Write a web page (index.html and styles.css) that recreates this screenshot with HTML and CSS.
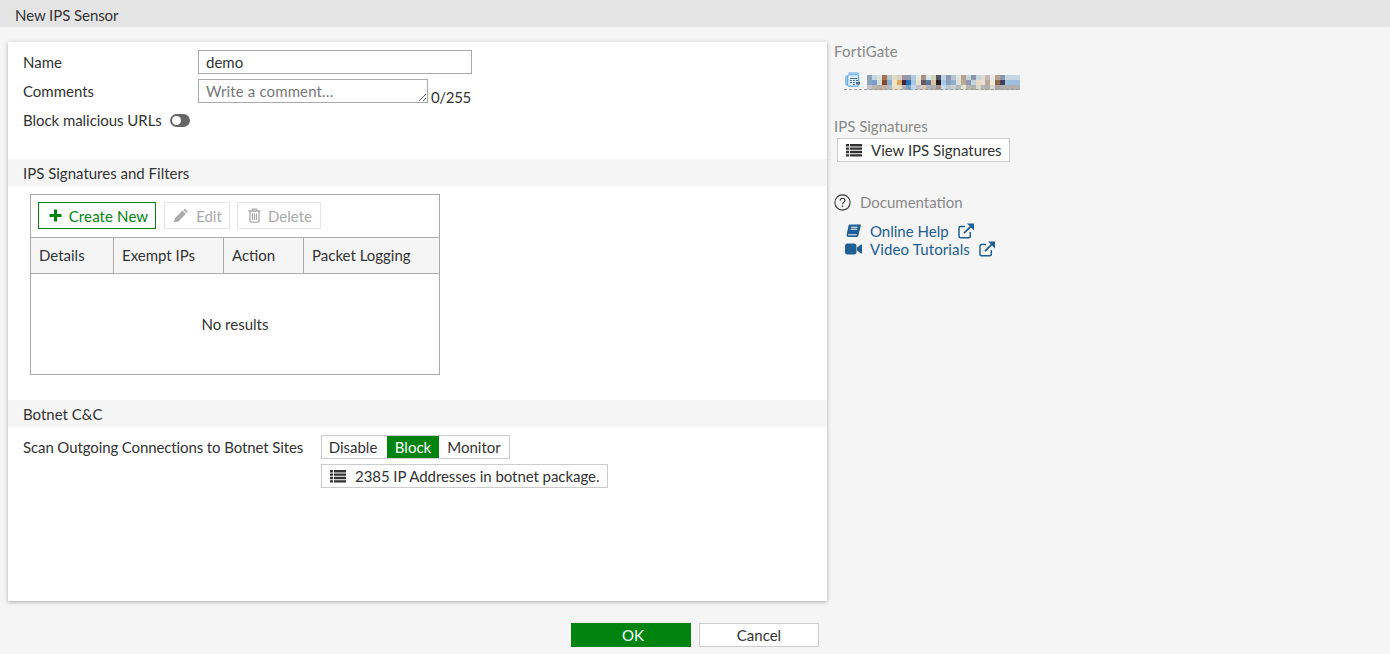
FILE: index.html
```html
<!DOCTYPE html>
<html lang="en">
<head>
<meta charset="utf-8">
<title>New IPS Sensor</title>
<link rel="stylesheet" href="styles.css">
</head>
<body>
<svg class="defs" width="0" height="0" aria-hidden="true">
  <symbol id="i-list" viewBox="0 0 16 14">
    <path d="M0 1h3v2.4H0zM4 1h12v2.4H4zM0 4.4h3v2.4H0zM4 4.4h12v2.4H4zM0 7.8h3v2.4H0zM4 7.8h12v2.4H4zM0 11.2h3v2.4H0zM4 11.2h12v2.4H4z"/>
  </symbol>
  <symbol id="i-ext" viewBox="0 0 16 16">
    <path d="M12.300 9v4.200c0 .9-.7 1.500-1.500 1.500H2.500c-.9 0-1.500-.6-1.500-1.500V5c0-.9.6-1.500 1.500-1.500H7" fill="none" stroke="currentColor" stroke-width="1.500"/>
    <path d="M6 10.200 13.500 2.700" fill="none" stroke="currentColor" stroke-width="1.800"/>
    <path d="M9 .4H16V7.400z" fill="currentColor"/>
  </symbol>
</svg>

<header class="title-bar">New IPS Sensor</header>

<div class="workspace">
  <main class="card">
    <div class="form-block">
      <div class="field field-name">
        <label class="field-label">Name</label>
        <input class="text-input" type="text" value="demo">
      </div>
      <div class="field field-comments">
        <label class="field-label">Comments</label>
        <textarea class="comment-input" placeholder="Write a comment…"></textarea>
        <span class="counter">0/255</span>
      </div>
      <div class="field field-toggle">
        <label class="toggle-label">Block malicious URLs</label>
        <span class="toggle"><span class="toggle-knob"></span></span>
      </div>
    </div>

    <h2 class="section-head">IPS Signatures and Filters</h2>
    <div class="table-wrap">
      <div class="table-box">
        <div class="toolbar">
          <button class="tool tool-create" type="button">
            <svg class="tool-icon" width="13" height="13" viewBox="0 0 13 13"><path d="M5 0.500h3V5h4.500v3H8v4.500H5V8H0.500V5H5z" fill="#00830f"/></svg>
            Create New
          </button>
          <button class="tool tool-edit" type="button">
            <svg class="tool-icon" width="15" height="14" viewBox="0 0 15 14"><path d="M0.800 13.300 1.700 9.400 9.500 1.600 12.800 4.900 5 12.700zM10.300 0.900 11 0.300C11.500-.1 12-.1 12.400.2L14.300 2.100C14.700 2.500 14.700 3 14.300 3.400L13.600 4.100z" fill="#aaa"/></svg>
            Edit
          </button>
          <button class="tool tool-delete" type="button">
            <svg class="tool-icon" width="13" height="15" viewBox="0 0 13 15"><path d="M0.500 3h12M4.500 3V1.200h4V3M2 3v10.200c0 .6.400 1 1 1h7c.6 0 1-.4 1-1V3" fill="none" stroke="#aaa" stroke-width="1.300"/><path d="M4.500 5.500v6.500M6.500 5.500v6.500M8.500 5.500v6.500" stroke="#aaa" stroke-width="1.200"/></svg>
            Delete
          </button>
        </div>
        <div class="thead">
          <div class="th th-details">Details</div>
          <div class="th th-exempt">Exempt IPs</div>
          <div class="th th-action">Action</div>
          <div class="th th-log">Packet Logging</div>
        </div>
        <div class="tbody">No results</div>
      </div>
    </div>

    <h2 class="section-head section-botnet">Botnet C&amp;C</h2>
    <div class="botnet">
      <span class="botnet-label">Scan Outgoing Connections to Botnet Sites</span>
      <div class="botnet-controls">
        <div class="segmented">
          <span class="seg seg-disable">Disable</span>
          <span class="seg seg-block">Block</span>
          <span class="seg seg-monitor">Monitor</span>
        </div>
        <button class="plain-btn botnet-btn" type="button">
          <svg class="list-icon" width="16" height="14"><use href="#i-list"/></svg>
          2385 IP Addresses in botnet package.
        </button>
      </div>
    </div>
  </main>

  <aside class="side">
    <div class="side-title side-forti">FortiGate</div>
    <div class="device">
      <svg class="device-icon" width="16" height="17" viewBox="0 0 16 17">
        <path d="M3.500 1h9c.8 0 1.300.5 1.300 1.300M1 3.500V12c0 .6.300 1 .8 1.200" fill="none" stroke="#5aa3e6" stroke-width="1.200"/>
        <rect x="2.700" y="2.800" width="11" height="11.500" rx="1.500" fill="#dcecfa" stroke="#5aa3e6" stroke-width="1.100"/>
        <path d="M5 6h7.500v1H5zM5 8h2v1H5zM8 8h2v1H8zM11 8h2v1h-2zM5 10h2v1H5zM8 10h2v1H8zM11 10h4v2.500h-4zM8 12h2v1H8z" fill="#4c6f92"/>
      </svg>
      <svg class="device-name" width="153" height="15" viewBox="0 0 31 3" preserveAspectRatio="none" shape-rendering="crispEdges" role="img" aria-label="Blurred device name">
        <g>
          <rect x="0" y="0" width="1" height="1" fill="#8fa3b5"/><rect x="1" y="0" width="1" height="1" fill="#c6d8e4"/><rect x="2" y="0" width="1" height="1" fill="#dbe3dc"/><rect x="3" y="0" width="1" height="1" fill="#a9714f"/><rect x="4" y="0" width="1" height="1" fill="#b2c6d2"/><rect x="5" y="0" width="1" height="1" fill="#e4dcc2"/><rect x="6" y="0" width="1" height="1" fill="#d8d0c0"/><rect x="7" y="0" width="1" height="1" fill="#a592a8"/><rect x="8" y="0" width="1" height="1" fill="#8c9cac"/><rect x="9" y="0" width="1" height="1" fill="#b2cade"/><rect x="10" y="0" width="1" height="1" fill="#e8e8e0"/><rect x="11" y="0" width="1" height="1" fill="#a89284"/><rect x="12" y="0" width="1" height="1" fill="#d2e6f2"/><rect x="13" y="0" width="1" height="1" fill="#dad2ba"/><rect x="14" y="0" width="1" height="1" fill="#55565e"/><rect x="15" y="0" width="1" height="1" fill="#bcd4ea"/><rect x="16" y="0" width="1" height="1" fill="#8c9cb2"/><rect x="17" y="0" width="1" height="1" fill="#b4c6d0"/><rect x="18" y="0" width="1" height="1" fill="#dde4dc"/><rect x="19" y="0" width="1" height="1" fill="#b2a294"/><rect x="20" y="0" width="1" height="1" fill="#c4d4dc"/><rect x="21" y="0" width="1" height="1" fill="#8e96ae"/><rect x="22" y="0" width="1" height="1" fill="#c8d8e0"/><rect x="23" y="0" width="1" height="1" fill="#e4dcc8"/><rect x="24" y="0" width="1" height="1" fill="#c8b8bc"/><rect x="25" y="0" width="1" height="1" fill="#e8e8e4"/><rect x="26" y="0" width="1" height="1" fill="#b8a48e"/><rect x="27" y="0" width="1" height="1" fill="#8e98b0"/><rect x="28" y="0" width="1" height="1" fill="#c4d8e4"/><rect x="29" y="0" width="1" height="1" fill="#c4d8e4"/><rect x="30" y="0" width="1" height="1" fill="#c4d8e4"/>
          <rect x="0" y="1" width="1" height="1" fill="#8aa6c2"/><rect x="1" y="1" width="1" height="1" fill="#78a2cc"/><rect x="2" y="1" width="1" height="1" fill="#d4dcd8"/><rect x="3" y="1" width="1" height="1" fill="#874a2c"/><rect x="4" y="1" width="1" height="1" fill="#86aed0"/><rect x="5" y="1" width="1" height="1" fill="#f2e4c4"/><rect x="6" y="1" width="1" height="1" fill="#e0a860"/><rect x="7" y="1" width="1" height="1" fill="#3a2a44"/><rect x="8" y="1" width="1" height="1" fill="#2a70b0"/><rect x="9" y="1" width="1" height="1" fill="#a8c8e4"/><rect x="10" y="1" width="1" height="1" fill="#e4e0d0"/><rect x="11" y="1" width="1" height="1" fill="#66585c"/><rect x="12" y="1" width="1" height="1" fill="#5a7898"/><rect x="13" y="1" width="1" height="1" fill="#d8c0a0"/><rect x="14" y="1" width="1" height="1" fill="#222226"/><rect x="15" y="1" width="1" height="1" fill="#a8c8e8"/><rect x="16" y="1" width="1" height="1" fill="#88a0b8"/><rect x="17" y="1" width="1" height="1" fill="#8cb0d0"/><rect x="18" y="1" width="1" height="1" fill="#dce0d8"/><rect x="19" y="1" width="1" height="1" fill="#b8a890"/><rect x="20" y="1" width="1" height="1" fill="#8c98b4"/><rect x="21" y="1" width="1" height="1" fill="#c0d4e0"/><rect x="22" y="1" width="1" height="1" fill="#e8dcc4"/><rect x="23" y="1" width="1" height="1" fill="#e8e0d0"/><rect x="24" y="1" width="1" height="1" fill="#b8a8a0"/><rect x="25" y="1" width="1" height="1" fill="#f0e8d8"/><rect x="26" y="1" width="1" height="1" fill="#8c6a48"/><rect x="27" y="1" width="1" height="1" fill="#3e405c"/><rect x="28" y="1" width="1" height="1" fill="#9cbedc"/><rect x="29" y="1" width="1" height="1" fill="#9cbedc"/><rect x="30" y="1" width="1" height="1" fill="#9cbedc"/>
          <rect x="0" y="2" width="1" height="1" fill="#bfc4c8"/><rect x="1" y="2" width="1" height="1" fill="#b8b4b0"/><rect x="2" y="2" width="1" height="1" fill="#b8b0a8"/><rect x="3" y="2" width="1" height="1" fill="#c4b09c"/><rect x="4" y="2" width="1" height="1" fill="#b0bcc4"/><rect x="5" y="2" width="1" height="1" fill="#e8e0cc"/><rect x="6" y="2" width="1" height="1" fill="#e8dcc4"/><rect x="7" y="2" width="1" height="1" fill="#b8b0b8"/><rect x="8" y="2" width="1" height="1" fill="#78a0c8"/><rect x="9" y="2" width="1" height="1" fill="#c8d8e8"/><rect x="10" y="2" width="1" height="1" fill="#c0c4cc"/><rect x="11" y="2" width="1" height="1" fill="#d8c8b0"/><rect x="12" y="2" width="1" height="1" fill="#b0b4b8"/><rect x="13" y="2" width="1" height="1" fill="#b0b0b0"/><rect x="14" y="2" width="1" height="1" fill="#a8908c"/><rect x="15" y="2" width="1" height="1" fill="#c8d8e4"/><rect x="16" y="2" width="1" height="1" fill="#c0c8d0"/><rect x="17" y="2" width="1" height="1" fill="#c8d0d4"/><rect x="18" y="2" width="1" height="1" fill="#b8bcb8"/><rect x="19" y="2" width="1" height="1" fill="#e4e4d8"/><rect x="20" y="2" width="1" height="1" fill="#b8b4ac"/><rect x="21" y="2" width="1" height="1" fill="#b0b0b0"/><rect x="22" y="2" width="1" height="1" fill="#d8d8cc"/><rect x="23" y="2" width="1" height="1" fill="#b8b8b8"/><rect x="24" y="2" width="1" height="1" fill="#b0b0ac"/><rect x="25" y="2" width="1" height="1" fill="#d8d8d4"/><rect x="26" y="2" width="1" height="1" fill="#a8a49c"/><rect x="27" y="2" width="1" height="1" fill="#b0b0b0"/><rect x="28" y="2" width="1" height="1" fill="#b0b0b0"/><rect x="29" y="2" width="1" height="1" fill="#b0b0b0"/><rect x="30" y="2" width="1" height="1" fill="#b0b0b0"/>
        </g>
      </svg>
    </div>

    <div class="side-title side-sig">IPS Signatures</div>
    <button class="plain-btn sig-btn" type="button">
      <svg class="list-icon" width="16" height="14"><use href="#i-list"/></svg>
      View IPS Signatures
    </button>

    <div class="doc-title">
      <svg class="doc-q" width="17" height="17" viewBox="0 0 16 16"><circle cx="8" cy="8" r="7.200" fill="none" stroke="#333" stroke-width="1"/><path d="M5.700 6.200C5.800 4.800 6.800 4 8 4c1.300 0 2.300.8 2.300 2 0 1.800-2.300 1.800-2.300 3.700" fill="none" stroke="#333" stroke-width="1"/><rect x="7.400" y="10.800" width="1.200" height="1.300" fill="#333"/></svg>
      <span>Documentation</span>
    </div>
    <a class="doc-link doc-help" href="#">
      <svg class="doc-icon" width="16" height="14" viewBox="0 0 16 14"><path d="M4.500 0.500H14.500C15.300 0.500 15.500 1 15.300 1.700L12.900 11.200C12.700 11.900 12.200 13 11.500 13H3C1.600 13 1 12.200 1.100 11L3 1.800C3.200 1 3.700 .5 4.500 .5Z" fill="#205f96"/><path d="M5.600 3.200h6.500M5.100 5.200h6.500M2.600 10.800h8.600" stroke="#f5f5f5" stroke-width="1"/></svg>
      <span>Online Help</span>
      <svg class="ext-icon" width="16" height="16"><use href="#i-ext"/></svg>
    </a>
    <a class="doc-link doc-video" href="#">
      <svg class="doc-icon" width="17" height="12" viewBox="0 0 17 12"><rect x="0" y="0.500" width="11.500" height="11" rx="2.500" fill="#205f96"/><path d="M12 4.400 16 1.500C16.400 1.200 17 1.500 17 2V10C17 10.500 16.400 10.800 16 10.500L12 7.600z" fill="#205f96"/></svg>
      <span class="video-text">Video Tutorials</span>
      <svg class="ext-icon" width="16" height="16"><use href="#i-ext"/></svg>
    </a>
  </aside>
</div>

<footer class="footer">
  <button class="foot-btn foot-ok" type="button">OK</button>
  <button class="foot-btn foot-cancel" type="button">Cancel</button>
</footer>
</body>
</html>
```
FILE: styles.css
```css
* { box-sizing: border-box; }
html, body { height: 100%; }
body {
  margin: 0;
  height: 654px;
  overflow: hidden;
  background: #f5f5f5;
  color: #333;
  font: 15px/18px Lato, "Open Sans", sans-serif;
  display: flex;
  flex-direction: column;
}
.defs { position: absolute; }

.title-bar {
  height: 27px;
  flex: none;
  background: #e4e4e4;
  padding: 6px 15px 0;
  letter-spacing: -.07px;
}

.workspace {
  display: flex;
  flex: none;
  height: 559px;
  margin-top: 15px;
  padding-left: 8px;
}

.card {
  width: 819px;
  background: #fff;
  box-shadow: 0 1px 4px rgba(0, 0, 0, .3);
  flex: none;
}

.form-block { height: 117px; padding: 8px 15px 0; }
.field { display: flex; align-items: flex-start; }
.field-label { width: 175px; flex: none; padding-top: 3px; }
.field-comments { margin-top: 5px; }
.field-toggle { margin-top: 8px; align-items: center; }
.toggle-label { letter-spacing: -.05px; }

.text-input, .comment-input {
  font: inherit;
  color: #333;
  background: #fff;
  border: 1px solid #aaa;
  padding: 2px 7px;
  margin: 0;
  height: 24px;
  outline: 0;
  display: block;
}
.text-input { width: 274px; }
.comment-input { width: 230px; resize: both; overflow: hidden; }
.comment-input::placeholder { color: #777; opacity: 1; letter-spacing: .13px; }
.counter { align-self: flex-end; margin-left: 3px; position: relative; top: 3px; letter-spacing: -.35px; }

.toggle {
  width: 20px;
  height: 13px;
  margin-left: 8px;
  background: #666;
  border-radius: 7px;
  display: block;
  padding: 2px;
}
.toggle-knob {
  display: block;
  width: 9px;
  height: 9px;
  background: #fff;
  border-radius: 50%;
}

.section-head {
  margin: 0;
  height: 27px;
  padding: 5px 15px 0;
  background: #f5f5f5;
  font: inherit;
}

.table-wrap { padding: 8px 22px 25px; }
.table-box { width: 410px; height: 181px; border: 1px solid #aaa; display: flex; flex-direction: column; }
.toolbar { height: 42px; display: flex; gap: 8px; padding: 7px 7px 0; flex: none; }
.tool {
  font: inherit;
  height: 27px;
  background: #fff;
  padding: 0;
  display: flex;
  align-items: center;
  justify-content: center;
  gap: 7px;
}
.tool-create { width: 118px; border: 1px solid #00830f; color: #00830f; letter-spacing: .12px; padding-left: 3px; }
.tool-edit { width: 66px; border: 1px solid #e6e6e6; color: #aaa; padding-left: 1px; gap: 8px; }
.tool-delete { width: 84px; border: 1px solid #e6e6e6; color: #aaa; margin-left: -1px; padding-left: 2px; }

.thead {
  display: flex;
  height: 37px;
  flex: none;
  background: #f5f5f5;
  border-top: 1px solid #aaa;
  border-bottom: 1px solid #aaa;
}
.th { padding: 8px 8px 0; border-right: 1px solid #aaa; flex: none; }
.th-details { width: 83px; }
.th-exempt { width: 110px; }
.th-action { width: 80px; }
.th-log { flex: 1; border-right: 0; }

.tbody { flex: 1; display: flex; align-items: center; justify-content: center; }

.botnet { display: flex; padding: 8px 15px 0; }
.botnet-label { width: 298px; flex: none; padding-top: 3px; letter-spacing: -.11px; }
.botnet-controls { display: flex; flex-direction: column; align-items: flex-start; gap: 5px; }
.segmented { display: flex; height: 24px; border: 1px solid #ccc; }
.seg { display: flex; align-items: center; justify-content: center; }
.seg-disable { width: 65px; padding-right: 3px; }
.seg-block { width: 52px; background: #00830f; color: #fff; }
.seg-monitor { width: 70px; }

.plain-btn {
  font: inherit;
  color: #333;
  background: #fff;
  border: 1px solid #ccc;
  height: 24px;
  padding: 0 0 0 8px;
  display: flex;
  align-items: center;
  gap: 9px;
}
.list-icon { fill: #333; flex: none; }
.botnet-btn { width: 287px; letter-spacing: -.06px; }

.side { flex: 1; padding: 0 0 0 7px; }
.side-title { color: #888; height: 18px; }
.side-forti { letter-spacing: .2px; }
.device { display: flex; height: 23px; margin-top: 14px; padding-left: 11px; width: 185px; position: relative; gap: 6px; }
.device::after { content: ""; position: absolute; left: 10px; width: 175px; top: 15px; border-bottom: 1px dashed #999; }
.device-icon { flex: none; margin-top: -2px; }
.device-name { flex: none; display: block; margin-top: 1px; }
.side-sig { margin-top: 20px; }
.sig-btn { margin: 3px 0 0 3px; width: 173px; }
.doc-title { display: flex; align-items: center; gap: 9px; margin-top: 31px; color: #888; height: 18px; }
.doc-q { flex: none; }
.doc-link { display: flex; align-items: center; color: #205f96; text-decoration: none; height: 18px; padding-left: 11px; }
.doc-help { margin-top: 11px; }
.doc-icon { flex: none; width: 17px; margin-right: 8px; }
.video-text { letter-spacing: .13px; }
.ext-icon { margin-left: 9px; color: #205f96; flex: none; }

.footer { flex: none; display: flex; padding: 22px 0 0 571px; gap: 8px; }
.foot-btn { width: 120px; height: 24px; font: inherit; padding: 0; }
.foot-ok { background: #00830f; color: #fff; border: 0; padding-left: 4px; }
.foot-cancel { background: #fff; border: 1px solid #ccc; color: #333; }
```
